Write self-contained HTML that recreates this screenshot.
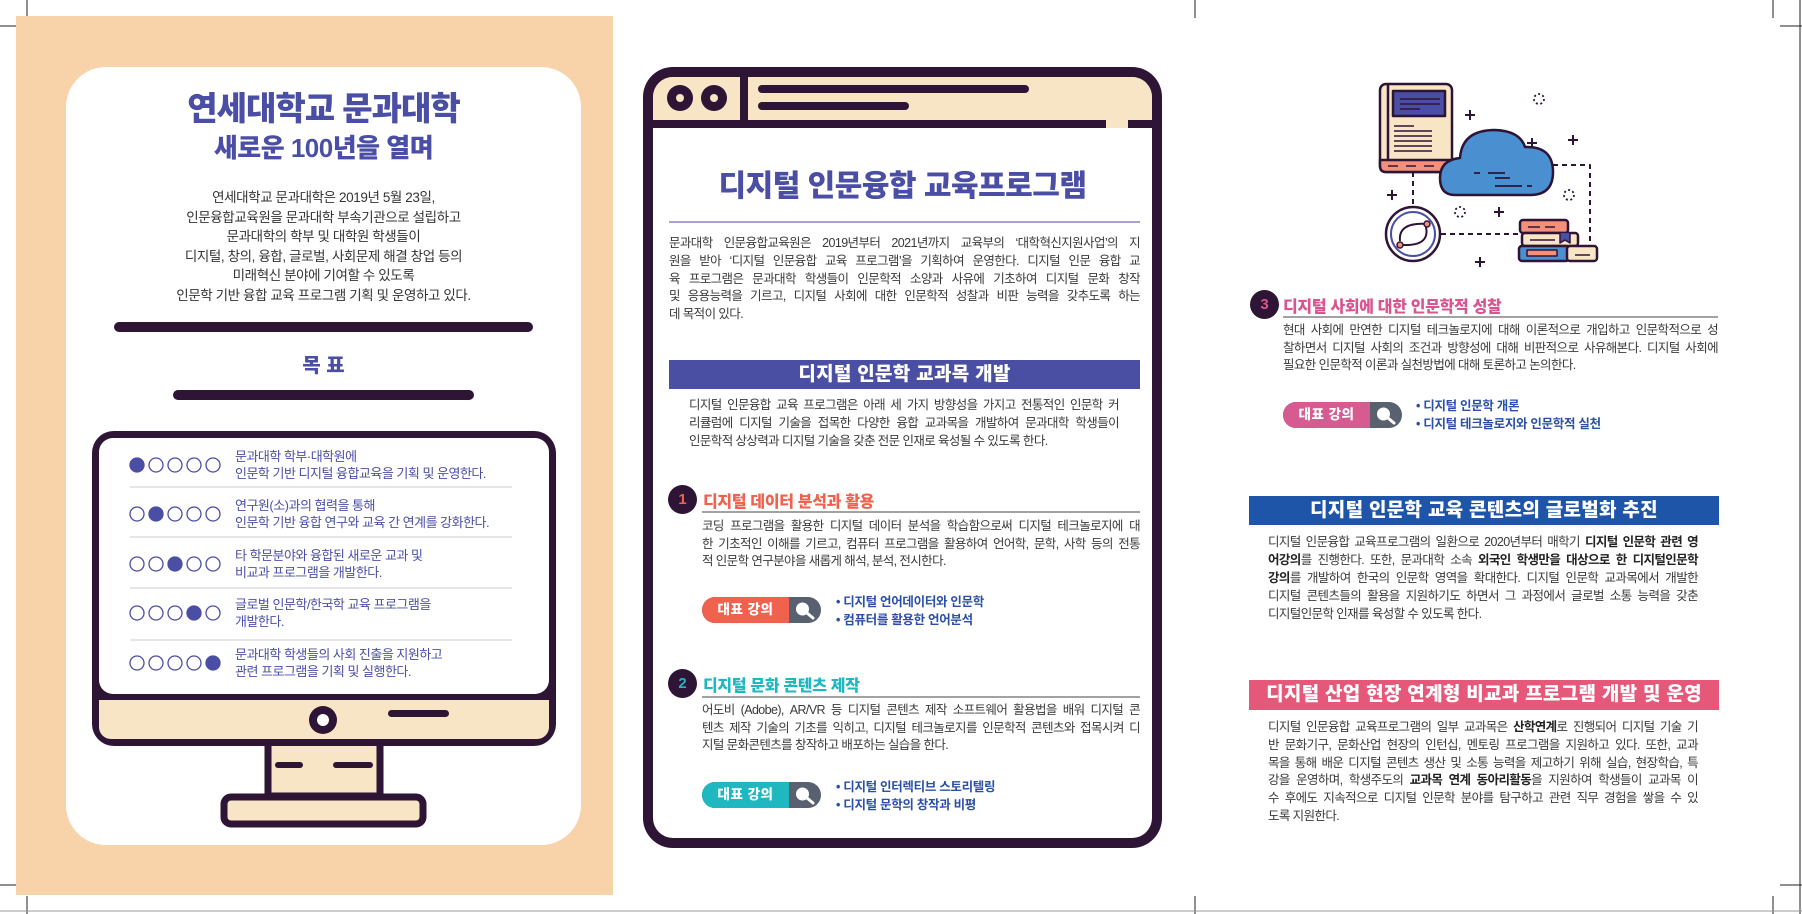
<!DOCTYPE html>
<html><head><meta charset="utf-8">
<style>
*{margin:0;padding:0;box-sizing:border-box}
body{width:1802px;height:914px;overflow:hidden;background:#fff;position:relative;font-family:"Liberation Sans","Noto Sans CJK KR",sans-serif;color:#333}
.a{position:absolute;white-space:nowrap}
.p{position:absolute;font-size:12.5px;letter-spacing:-0.6px;color:#3a3a3a}
.p span{display:block;white-space:nowrap;text-align:justify;text-align-last:justify}
.p span.l{text-align-last:left}
.p b{color:#222}
.t{font-weight:900;color:#4a4ea5;text-align:center}
.hd{position:absolute;font-weight:900;font-size:16px;letter-spacing:-0.3px;white-space:nowrap}
.num{position:absolute;width:29px;height:29px;border-radius:50%;background:#2e1435;font-size:15px;text-align:center;line-height:29px;font-weight:700}
.pill{position:absolute;height:26px;width:119px;border-radius:13px;overflow:hidden;background:#596070}
.pill div{position:absolute;left:0;top:0;bottom:0;width:87px;color:#fff;font-weight:900;font-size:13.5px;text-align:center;line-height:26px;letter-spacing:0.5px}
.pill svg{position:absolute;left:92px;top:4px}
.li{position:absolute;font-size:12.5px;font-weight:700;color:#2b4fa8;line-height:18px;white-space:nowrap;letter-spacing:-0.3px}
.ban{position:absolute;color:#fff;font-weight:900;font-size:19px;text-align:center;white-space:nowrap;letter-spacing:0.3px}
.g{position:absolute;left:235px;font-size:13px;letter-spacing:-0.5px;color:#4b4fa8;line-height:17px;white-space:nowrap}
</style></head><body>
<svg class="a" style="left:0;top:0" width="1802" height="914" viewBox="0 0 1802 914">
<g stroke="#222" stroke-width="1">
<line x1="27" y1="0" x2="27" y2="18"/><line x1="0" y1="26" x2="18" y2="26"/>
<line x1="27" y1="896" x2="27" y2="914"/><line x1="0" y1="885" x2="18" y2="885"/>
<line x1="1195" y1="0" x2="1195" y2="18"/><line x1="1195" y1="896" x2="1195" y2="914"/>
<line x1="1773" y1="0" x2="1773" y2="18"/><line x1="1780" y1="26" x2="1802" y2="26"/>
<line x1="1773" y1="896" x2="1773" y2="914"/><line x1="1780" y1="885" x2="1802" y2="885"/>
<line x1="1800" y1="0" x2="1800" y2="914"/>
</g>
<line x1="0" y1="911" x2="1802" y2="911" stroke="#999" stroke-width="1"/>
<rect x="16" y="16" width="597" height="879" fill="#f8d2a9"/>
<rect x="66" y="67" width="515" height="778" rx="40" fill="#fff"/>
<rect x="114" y="322" width="419" height="10" rx="5" fill="#2e1435"/>
<rect x="173" y="390" width="301" height="10" rx="5" fill="#2e1435"/>
<rect x="268" y="740" width="112" height="56" fill="#f8e5c5" stroke="#2e1435" stroke-width="7"/>
<rect x="275" y="762" width="28" height="6" rx="3" fill="#2e1435"/>
<rect x="333" y="762" width="40" height="6" rx="3" fill="#2e1435"/>
<rect x="224" y="797" width="199" height="27" rx="7" fill="#f8e5c5" stroke="#2e1435" stroke-width="7"/>
<rect x="92" y="431" width="464" height="315" rx="22" fill="#2e1435"/>
<rect x="99" y="438" width="450" height="256" rx="14" fill="#fff"/>
<rect x="99" y="700" width="450" height="39" rx="12" fill="#f8e5c5"/>
<rect x="99" y="700" width="450" height="12" fill="#f8e5c5"/>
<circle cx="323" cy="720" r="14" fill="#2e1435"/><circle cx="323" cy="720" r="6" fill="#fff"/>
<rect x="388" y="710" width="61" height="7" rx="3.5" fill="#2e1435"/>
<g stroke="#ccc" stroke-width="1"><line x1="130" y1="487" x2="512" y2="487"/><line x1="130" y1="537" x2="512" y2="537"/><line x1="130" y1="588" x2="512" y2="588"/><line x1="130" y1="640" x2="512" y2="640"/></g>
<g fill="none" stroke="#4a4ea5" stroke-width="1.3">
<circle cx="137" cy="465" r="7" fill="#4a4ea5"/><circle cx="156" cy="465" r="7"/><circle cx="175" cy="465" r="7"/><circle cx="194" cy="465" r="7"/><circle cx="213" cy="465" r="7"/>
<circle cx="137" cy="514" r="7"/><circle cx="156" cy="514" r="7" fill="#4a4ea5"/><circle cx="175" cy="514" r="7"/><circle cx="194" cy="514" r="7"/><circle cx="213" cy="514" r="7"/>
<circle cx="137" cy="564" r="7"/><circle cx="156" cy="564" r="7"/><circle cx="175" cy="564" r="7" fill="#4a4ea5"/><circle cx="194" cy="564" r="7"/><circle cx="213" cy="564" r="7"/>
<circle cx="137" cy="613" r="7"/><circle cx="156" cy="613" r="7"/><circle cx="175" cy="613" r="7"/><circle cx="194" cy="613" r="7" fill="#4a4ea5"/><circle cx="213" cy="613" r="7"/>
<circle cx="137" cy="663" r="7"/><circle cx="156" cy="663" r="7"/><circle cx="175" cy="663" r="7"/><circle cx="194" cy="663" r="7"/><circle cx="213" cy="663" r="7" fill="#4a4ea5"/>
</g>
<rect x="643" y="67" width="519" height="781" rx="30" fill="#2e1435"/>
<rect x="653" y="77" width="499" height="761" rx="20" fill="#fff"/>
<rect x="653" y="77" width="499" height="44" rx="20" fill="#f8e5c5"/>
<rect x="653" y="100" width="499" height="21" fill="#f8e5c5"/>
<rect x="653" y="120" width="499" height="8" fill="#2e1435"/>
<rect x="1106" y="120" width="22" height="8" fill="#f8e5c5"/>
<rect x="740" y="77" width="8" height="45" fill="#2e1435"/>
<circle cx="680" cy="98" r="13" fill="#2e1435"/><circle cx="680" cy="98" r="4" fill="#f8e5c5"/>
<circle cx="714" cy="98" r="13" fill="#2e1435"/><circle cx="714" cy="98" r="4" fill="#f8e5c5"/>
<rect x="758" y="85" width="271" height="8" rx="4" fill="#2e1435"/>
<rect x="758" y="102" width="151" height="8" rx="4" fill="#2e1435"/>
<line x1="669" y1="222" x2="1140" y2="222" stroke="#4a4ea5" stroke-width="1"/>
<rect x="669" y="360" width="471" height="29" fill="#4b4fa3"/>
<line x1="702" y1="512" x2="1140" y2="512" stroke="#444" stroke-width="1"/>
<line x1="702" y1="697" x2="1140" y2="697" stroke="#444" stroke-width="1"/>
<line x1="1283" y1="317" x2="1718" y2="317" stroke="#444" stroke-width="1"/>
<rect x="1249" y="496" width="470" height="29" fill="#1f55a8"/>
<rect x="1249" y="680" width="470" height="30" fill="#e5587a"/>
<g stroke="#2e1435" stroke-width="2.5" stroke-linejoin="round">
<path d="M1413 172 V207 M1441 234 H1519 M1553 165 H1590 V245" fill="none" stroke-dasharray="5 4" stroke-width="2"/>
<rect x="1380" y="84" width="72" height="88" rx="6" fill="#f8e5c5"/>
<path d="M1388 84 V160" fill="none"/>
<rect x="1393" y="91" width="52" height="25" fill="#4a4ea5"/>
<path d="M1380 160 H1452 V166 Q1452 172 1446 172 H1386 Q1380 172 1380 166Z" fill="#f4907a"/>
<g stroke-width="1.6"><path d="M1400 99 H1440 M1400 104 H1440 M1400 109 H1420 M1394 126 H1414 M1394 131 H1432 M1394 136 H1432 M1394 141 H1432 M1394 146 H1432 M1394 151 H1432"/><path d="M1388 166 H1398 M1406 166 H1416 M1424 166 H1434"/></g>
<path d="M1455 195 Q1440 195 1440 178 Q1440 160 1460 158 Q1462 130 1495 130 Q1520 131 1525 147 Q1553 146 1553 172 Q1553 195 1530 195 Z" fill="#4a8fcf"/>
<g stroke-width="1.8"><path d="M1474 173 H1480 M1488 173 H1505 M1495 178 H1510 M1495 186 H1522 M1527 186 H1532"/></g>
<circle cx="1413" cy="234" r="27" fill="#fff"/>
<circle cx="1413" cy="234" r="22" fill="none" stroke="#4a4ea5" stroke-width="2"/>
<path d="M1400 241 Q1398 222 1427 224 M1426 227 Q1430 246 1403 245" fill="none" stroke-width="2"/>
<circle cx="1427" cy="224" r="3" fill="#f4907a" stroke-width="1.5"/><circle cx="1400" cy="245" r="3" fill="#f4907a" stroke-width="1.5"/>
<rect x="1520" y="220" width="48" height="13" rx="3" fill="#f4907a"/>
<rect x="1522" y="233" width="56" height="13" rx="3" fill="#f8e5c5"/>
<rect x="1519" y="246" width="50" height="15" rx="3" fill="#4a8fcf"/>
<rect x="1567" y="246" width="30" height="15" rx="3" fill="#f8e5c5"/>
<rect x="1527" y="250" width="30" height="6" fill="#f4907a" stroke-width="1.5"/>
<path d="M1560 233 V243 L1565 240 L1570 243 V233" fill="#4a4ea5" stroke-width="1.5"/>
<g stroke-width="1.6"><path d="M1528 227 H1540 M1545 227 H1555 M1530 240 H1555 M1575 255 H1590"/></g>
</g>
<g stroke="#2e1435" stroke-width="2"><path d="M1470 110 v10 M1465 115 h10 M1532 138 v10 M1527 143 h10 M1392 190 v10 M1387 195 h10 M1499 207 v10 M1494 212 h10 M1480 257 v10 M1475 262 h10 M1573 135 v10 M1568 140 h10"/></g>
<g fill="none" stroke="#2e1435" stroke-width="1.8" stroke-dasharray="2 2.5"><circle cx="1539" cy="99" r="5"/><circle cx="1569" cy="195" r="5"/><circle cx="1460" cy="212" r="5"/></g>
</svg>

<div class="a t" style="left:66px;width:515px;top:90px;font-size:33px;letter-spacing:-1px;line-height:38px">연세대학교 문과대학</div>
<div class="a t" style="left:66px;width:515px;top:133px;font-size:26px;letter-spacing:-0.5px;line-height:30px">새로운 100년을 열며</div>
<div class="a" style="left:66px;width:515px;top:188px;font-size:13.5px;letter-spacing:-0.4px;line-height:19.5px;text-align:center;color:#333">연세대학교 문과대학은 2019년 5월 23일,<br>인문융합교육원을 문과대학 부속기관으로 설립하고<br>문과대학의 학부 및 대학원 학생들이<br>디지털, 창의, 융합, 글로벌, 사회문제 해결 창업 등의<br>미래혁신 분야에 기여할 수 있도록<br>인문학 기반 융합 교육 프로그램 기획 및 운영하고 있다.</div>
<div class="a t" style="left:66px;width:515px;top:353px;font-size:20px;line-height:26px">목 표</div>
<div class="g" style="top:448px">문과대학 학부·대학원에<br>인문학 기반 디지털 융합교육을 기획 및 운영한다.</div>
<div class="g" style="top:497px">연구원(소)과의 협력을 통해<br>인문학 기반 융합 연구와 교육 간 연계를 강화한다.</div>
<div class="g" style="top:547px">타 학문분야와 융합된 새로운 교과 및<br>비교과 프로그램을 개발한다.</div>
<div class="g" style="top:596px">글로벌 인문학/한국학 교육 프로그램을<br>개발한다.</div>
<div class="g" style="top:646px">문과대학 학생들의 사회 진출을 지원하고<br>관련 프로그램을 기획 및 실행한다.</div>

<div class="a t" style="left:653px;width:499px;top:168px;font-size:30px;letter-spacing:-0.5px;line-height:38px">디지털 인문융합 교육프로그램</div>
<div class="p" style="left:669px;top:235px;width:471px;line-height:17.8px">
<span>문과대학 인문융합교육원은 2019년부터 2021년까지 교육부의 ‘대학혁신지원사업’의 지</span>
<span>원을 받아 ‘디지털 인문융합 교육 프로그램’을 기획하여 운영한다. 디지털 인문 융합 교</span>
<span>육 프로그램은 문과대학 학생들이 인문학적 소양과 사유에 기초하여 디지털 문화 창작</span>
<span>및 응용능력을 기르고, 디지털 사회에 대한 인문학적 성찰과 비판 능력을 갖추도록 하는</span>
<span class="l">데 목적이 있다.</span></div>
<div class="ban" style="left:669px;width:471px;top:360px;line-height:29px">디지털 인문학 교과목 개발</div>
<div class="p" style="left:689px;top:396px;width:430px;line-height:18px">
<span>디지털 인문융합 교육 프로그램은 아래 세 가지 방향성을 가지고 전통적인 인문학 커</span>
<span>리큘럼에 디지털 기술을 접목한 다양한 융합 교과목을 개발하여 문과대학 학생들이</span>
<span class="l">인문학적 상상력과 디지털 기술을 갖춘 전문 인재로 육성될 수 있도록 한다.</span></div>

<div class="num" style="left:668px;top:485px;color:#f0624d">1</div>
<div class="hd" style="left:703px;top:488px;color:#f0624d">디지털 데이터 분석과 활용</div>
<div class="p" style="left:702px;top:518px;width:438px;line-height:17.5px">
<span>코딩 프로그램을 활용한 디지털 데이터 분석을 학습함으로써 디지털 테크놀로지에 대</span>
<span>한 기초적인 이해를 기르고, 컴퓨터 프로그램을 활용하여 언어학, 문학, 사학 등의 전통</span>
<span class="l">적 인문학 연구분야을 새롭게 해석, 분석, 전시한다.</span></div>
<div class="pill" style="left:702px;top:597px"><div style="background:#f0624d">대표 강의</div><svg width="22" height="19" viewBox="0 0 22 19"><circle cx="8.5" cy="8" r="6.5" fill="#fff"/><path d="M13 12 L19 17" stroke="#fff" stroke-width="3" stroke-linecap="round"/></svg></div>
<div class="li" style="left:836px;top:593px">• 디지털 언어데이터와 인문학<br>• 컴퓨터를 활용한 언어분석</div>

<div class="num" style="left:668px;top:669px;color:#1fb8c0">2</div>
<div class="hd" style="left:703px;top:672px;color:#1fb8c0">디지털 문화 콘텐츠 제작</div>
<div class="p" style="left:702px;top:702px;width:438px;line-height:17.5px">
<span>어도비 (Adobe), AR/VR 등 디지털 콘텐츠 제작 소프트웨어 활용법을 배워 디지털 콘</span>
<span>텐츠 제작 기술의 기초를 익히고, 디지털 테크놀로지를 인문학적 콘텐츠와 접목시켜 디</span>
<span class="l">지털 문화콘텐츠를 창작하고 배포하는 실습을 한다.</span></div>
<div class="pill" style="left:702px;top:782px"><div style="background:#1fb8c0">대표 강의</div><svg width="22" height="19" viewBox="0 0 22 19"><circle cx="8.5" cy="8" r="6.5" fill="#fff"/><path d="M13 12 L19 17" stroke="#fff" stroke-width="3" stroke-linecap="round"/></svg></div>
<div class="li" style="left:836px;top:778px">• 디지털 인터렉티브 스토리텔링<br>• 디지털 문학의 창작과 비평</div>

<div class="num" style="left:1250px;top:290px;color:#d9558f">3</div>
<div class="hd" style="left:1283px;top:293px;color:#d9558f">디지털 사회에 대한 인문학적 성찰</div>
<div class="p" style="left:1283px;top:322px;width:435px;line-height:17.5px">
<span>현대 사회에 만연한 디지털 테크놀로지에 대해 이론적으로 개입하고 인문학적으로 성</span>
<span>찰하면서 디지털 사회의 조건과 방향성에 대해 비판적으로 사유해본다. 디지털 사회에</span>
<span class="l">필요한 인문학적 이론과 실천방법에 대해 토론하고 논의한다.</span></div>
<div class="pill" style="left:1283px;top:402px"><div style="background:#d65b91">대표 강의</div><svg width="22" height="19" viewBox="0 0 22 19"><circle cx="8.5" cy="8" r="6.5" fill="#fff"/><path d="M13 12 L19 17" stroke="#fff" stroke-width="3" stroke-linecap="round"/></svg></div>
<div class="li" style="left:1416px;top:397px">• 디지털 인문학 개론<br>• 디지털 테크놀로지와 인문학적 실천</div>

<div class="ban" style="left:1249px;width:470px;top:496px;line-height:29px">디지털 인문학 교육 콘텐츠의 글로벌화 추진</div>
<div class="p" style="left:1268px;top:533px;width:430px;line-height:18px">
<span>디지털 인문융합 교육프로그램의 일환으로 2020년부터 매학기 <b>디지털 인문학 관련 영</b></span>
<span><b>어강의</b>를 진행한다. 또한, 문과대학 소속 <b>외국인 학생만을 대상으로 한 디지털인문학</b></span>
<span><b>강의</b>를 개발하여 한국의 인문학 영역을 확대한다. 디지털 인문학 교과목에서 개발한</span>
<span>디지털 콘텐츠들의 활용을 지원하기도 하면서 그 과정에서 글로벌 소통 능력을 갖춘</span>
<span class="l">디지털인문학 인재를 육성할 수 있도록 한다.</span></div>

<div class="ban" style="left:1249px;width:470px;top:680px;line-height:30px">디지털 산업 현장 연계형 비교과 프로그램 개발 및 운영</div>
<div class="p" style="left:1268px;top:719px;width:430px;line-height:17.8px">
<span>디지털 인문융합 교육프로그램의 일부 교과목은 <b>산학연계</b>로 진행되어 디지털 기술 기</span>
<span>반 문화기구, 문화산업 현장의 인턴십, 멘토링 프로그램을 지원하고 있다. 또한, 교과</span>
<span>목을 통해 배운 디지털 콘텐츠 생산 및 소통 능력을 제고하기 위해 실습, 현장학습, 특</span>
<span>강을 운영하며, 학생주도의 <b>교과목 연계 동아리활동</b>을 지원하여 학생들이 교과목 이</span>
<span>수 후에도 지속적으로 디지털 인문학 분야를 탐구하고 관련 직무 경험을 쌓을 수 있</span>
<span class="l">도록 지원한다.</span></div>
</body></html>
